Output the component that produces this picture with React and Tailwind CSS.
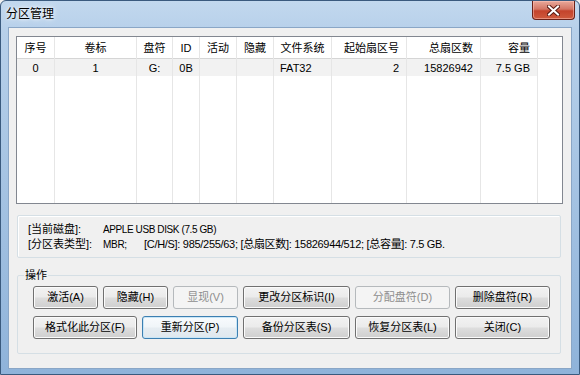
import React from "react";

const cols = [
  { h: "序号", w: 38, d: "0", a: "center" },
  { h: "卷标", w: 82, d: "1", a: "center" },
  { h: "盘符", w: 36, d: "G:", a: "center" },
  { h: "ID", w: 27, d: "0B", a: "center" },
  { h: "活动", w: 37, d: "", a: "center" },
  { h: "隐藏", w: 37, d: "", a: "center" },
  { h: "文件系统", w: 58, d: "FAT32", a: "center", da: "left" },
  { h: "起始扇区号", w: 75, d: "2", a: "right" },
  { h: "总扇区数", w: 74, d: "15826942", a: "right" },
  { h: "容量", w: 57, d: "7.5 GB", a: "right" },
];

const alignCls = {
  center: "justify-center",
  left: "justify-start pl-[6px]",
  right: "justify-end pr-[7px]",
};

function Btn({ children, w, kind = "normal" }) {
  const base =
    "h-[23px] flex items-center justify-center rounded-[3px] border text-[11px] leading-none";
  const styles = {
    normal:
      "border-[#707070] text-black bg-[linear-gradient(180deg,#f2f2f2_0%,#ebebeb_48%,#dddddd_52%,#cfcfcf_100%)] shadow-[inset_0_0_0_1px_#fbfbfb]",
    def:
      "border-[#3c7fb1] text-black bg-[linear-gradient(180deg,#f8fbfd_0%,#f0f5f8_48%,#e6edf2_52%,#dfe8ee_100%)] shadow-[inset_0_0_0_1px_#c9e6f7]",
    disabled: "border-[#b5b9bc] text-[#8d8d8d] bg-[#f4f4f4]",
  };
  return (
    <div className={`${base} ${styles[kind]}`} style={{ width: w }}>
      {children}
    </div>
  );
}

export default function App() {
  return (
    <div
      className="w-[580px] h-[375px] overflow-hidden bg-[#f0f0f0]"
      style={{ fontFamily: '"Liberation Sans", "Noto Sans CJK SC", sans-serif' }}
    >
      <div className="w-[580px] h-[375px] flex flex-col rounded-t-[6px] border border-[#3a5a7e] bg-[linear-gradient(180deg,#c2d8ee_0%,#b7d0ea_8%,#a9c6e4_40%,#8fb3da_100%)]">
        {/* title bar */}
        <div className="h-[26px] flex justify-between items-start shrink-0">
          <div
            className="pl-[5px] pt-[5px] text-[12px] leading-[14px] text-black [text-shadow:0_0_6px_#ffffff,0_0_3px_#ffffff]"
            style={{ fontFamily: '"Noto Sans CJK SC", sans-serif' }}
          >
            分区管理
          </div>
          <div className="mr-[4px] w-[43px] h-[19px] rounded-b-[4px] border border-t-0 border-[#6b2118] bg-[linear-gradient(180deg,#e9a99b_0%,#d47665_45%,#c4432c_55%,#cf5a3d_100%)] shadow-[inset_0_0_0_1px_rgba(255,200,190,0.5)] flex items-center justify-center">
            <svg width="13" height="11" viewBox="0 0 13 11">
              <path
                d="M2 1.5 L11 9.5 M11 1.5 L2 9.5"
                stroke="#5a1a12"
                strokeWidth="4"
                strokeLinecap="square"
              />
              <path
                d="M2 1.5 L11 9.5 M11 1.5 L2 9.5"
                stroke="#ffffff"
                strokeWidth="2"
                strokeLinecap="square"
              />
            </svg>
          </div>
        </div>

        {/* client area */}
        <div className="mx-[7px] h-[342px] border border-[#8aa6c6] bg-[#f0f0f0] flex flex-col pl-[7px] pr-[8px] pt-[8px]">
          {/* list view */}
          <div className="h-[168px] border border-[#828790] bg-white flex text-[11px] text-black">
            {cols.map((c, i) => (
              <div
                key={i}
                className="flex flex-col border-r border-[#e6e6e6] shrink-0"
                style={{ width: c.w }}
              >
                <div
                  className={`h-[22px] flex items-end pb-[3px] border-b border-[#d5d5d5] leading-[14px] ${alignCls[c.a]}`}
                >
                  {c.h}
                </div>
                <div
                  className={`h-[17px] flex items-center bg-[#f2f2f2] leading-[14px] ${
                    alignCls[c.da || c.a]
                  }`}
                >
                  {c.d}
                </div>
              </div>
            ))}
            <div className="flex-1 flex flex-col">
              <div className="h-[22px] border-b border-[#d5d5d5]" />
            </div>
          </div>

          {/* info box */}
          <div className="mt-[11px] ml-[1px] mr-[2px] h-[43px] border border-[#d5dfe5] rounded-[2px] shadow-[inset_1px_1px_0_#ffffff] pl-[10px] pt-[6px] text-[11px] leading-[15px] text-black">
            <div className="flex">
              <div className="w-[75px]">[当前磁盘]:</div>
              <div className="text-[10px] tracking-[-0.4px]">APPLE USB DISK (7.5 GB)</div>
            </div>
            <div className="flex">
              <div className="w-[75px]">[分区表类型]:</div>
              <div className="w-[41px] text-[10px] tracking-[-0.3px]">MBR;</div>
              <div className="tracking-[-0.3px]">
                [C/H/S]: 985/255/63; [总扇区数]: 15826944/512; [总容量]: 7.5 GB.
              </div>
            </div>
          </div>

          {/* operations */}
          <fieldset className="mt-[10px] ml-[1px] mr-[2px] h-[86px] border border-[#d5dfe5] rounded-[2px] pt-[4px]">
            <legend className="ml-[6px] px-[1px] text-[11px] leading-[14px] text-black">
              操作
            </legend>
            <div className="flex flex-col gap-[7px] pl-[15px]">
              <div className="flex gap-[5px]">
                <Btn w={65}>激活(A)</Btn>
                <Btn w={65}>隐藏(H)</Btn>
                <Btn w={65} kind="disabled">
                  显现(V)
                </Btn>
                <Btn w={107}>更改分区标识(I)</Btn>
                <Btn w={95} kind="disabled">
                  分配盘符(D)
                </Btn>
                <Btn w={95}>删除盘符(R)</Btn>
              </div>
              <div className="flex gap-[5px]">
                <Btn w={104}>格式化此分区(F)</Btn>
                <Btn w={96} kind="def">
                  重新分区(P)
                </Btn>
                <Btn w={107}>备份分区表(S)</Btn>
                <Btn w={95}>恢复分区表(L)</Btn>
                <Btn w={95}>关闭(C)</Btn>
              </div>
            </div>
          </fieldset>
        </div>
      </div>
    </div>
  );
}
